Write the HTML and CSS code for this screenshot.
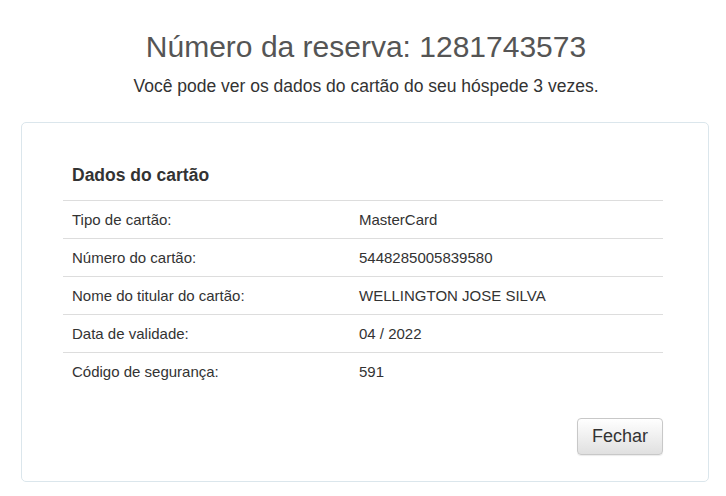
FILE: index.html
```html
<!DOCTYPE html>
<html lang="pt">
<head>
<meta charset="utf-8">
<link rel="stylesheet" href="styles.css">
</head>
<body>
<div class="page">
  <h1 class="title">Número da reserva: 1281743573</h1>
  <p class="subtitle">Você pode ver os dados do cartão do seu hóspede 3 vezes.</p>
  <div class="card">
    <h2 class="card-heading">Dados do cartão</h2>
    <table class="details">
      <tr><td class="label">Tipo de cartão:</td><td>MasterCard</td></tr>
      <tr><td class="label">Número do cartão:</td><td>5448285005839580</td></tr>
      <tr><td class="label">Nome do titular do cartão:</td><td>WELLINGTON JOSE SILVA</td></tr>
      <tr><td class="label">Data de validade:</td><td>04 / 2022</td></tr>
      <tr><td class="label">Código de segurança:</td><td>591</td></tr>
    </table>
    <div class="actions">
      <button class="btn" type="button">Fechar</button>
    </div>
  </div>
</div>
</body>
</html>
```

FILE: styles.css
```css
* { box-sizing: border-box; }
html, body { margin: 0; padding: 0; background: #fff; }
body {
  font-family: "Liberation Sans", Arial, sans-serif;
  color: #333;
  font-size: 15px;
}
.page { padding: 30px 17px 0 21px; }
.title {
  margin: 0;
  font-size: 30px;
  line-height: 33px;
  font-weight: normal;
  color: #555;
  text-align: center;
  padding-left: 2px;
}
.subtitle {
  margin: 12px 0 0;
  font-size: 17.5px;
  line-height: 22px;
  text-align: center;
  color: #333;
  padding-left: 2px;
}
.card {
  margin-top: 25px;
  width: 688px;
  border: 1px solid #dbe6ec;
  border-radius: 5px;
  padding: 42px 45px 26px 41px;
}
.card-heading {
  margin: 0 0 15px 9px;
  font-size: 17.5px;
  line-height: 20px;
  font-weight: bold;
  color: #333;
}
.details {
  width: 100%;
  border-collapse: collapse;
}
.details td {
  border-top: 1px solid #ddd;
  height: 38px;
  padding: 0 9px;
  vertical-align: middle;
  font-size: 15px;
  color: #333;
}
.details td.label { width: 287px; }
.actions {
  display: flex;
  justify-content: flex-end;
  margin-top: 27px;
}
.btn {
  font-family: "Liberation Sans", Arial, sans-serif;
  font-size: 18px;
  color: #333;
  height: 37px;
  width: 86px;
  padding: 0;
  border: 1px solid #c8c8c8;
  border-radius: 4px;
  background: linear-gradient(to bottom, #fff 0%, #e0e0e0 100%);
  box-shadow: 0 1px 1px rgba(0,0,0,0.08);
  cursor: pointer;
}
```
